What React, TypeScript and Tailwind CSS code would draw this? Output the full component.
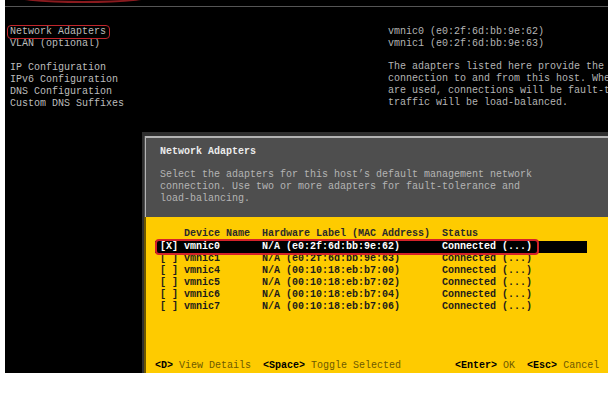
const mono = { fontFamily: '"Liberation Mono", "DejaVu Sans Mono", monospace' };

const menuItems = [
  "Network Adapters",
  "VLAN (optional)",
  "",
  "IP Configuration",
  "IPv6 Configuration",
  "DNS Configuration",
  "Custom DNS Suffixes",
];

const adapters = [
  { name: "vmnic0", mac: "e0:2f:6d:bb:9e:62", checked: true },
  { name: "vmnic1", mac: "e0:2f:6d:bb:9e:63", checked: false },
  { name: "vmnic4", mac: "00:10:18:eb:b7:00", checked: false },
  { name: "vmnic5", mac: "00:10:18:eb:b7:02", checked: false },
  { name: "vmnic6", mac: "00:10:18:eb:b7:04", checked: false },
  { name: "vmnic7", mac: "00:10:18:eb:b7:06", checked: false },
];

function rowText(a: (typeof adapters)[number]) {
  const left = `[${a.checked ? "X" : " "}] ${a.name}`.padEnd(17, " ");
  const mid = `N/A (${a.mac})`.padEnd(30, " ");
  return left + mid + "Connected (...)";
}

function NetworkDialog() {
  return (
    <div className="absolute left-[137px] top-[132px] h-[241px] w-[466px] border-l-2 border-t-4 border-[#2f2f2f] bg-[#4e4e4e]">
      <div className="flex h-full flex-col">
        <div className="ml-[1px] h-[81px] border-l border-t-2 border-[#b4b4b4] pl-[14px] pt-[8px]">
          <div className="h-[12px] text-[10px] font-bold leading-[12px] text-[#ececec]">Network Adapters</div>
          <div className="mt-[11px] whitespace-pre text-[10px] leading-[12px] text-[#b4b4b4]">
            {"Select the adapters for this host’s default management network\nconnection. Use two or more adapters for fault-tolerance and\nload-balancing."}
          </div>
        </div>
        <div className="relative flex-1 border-l-2 border-[#6b5500] bg-[#fecb00] pt-[11px]">
          <div className="whitespace-pre pl-[14px] text-[10px] font-bold leading-[12px] text-[#2a2a2a]">
            {"    Device Name  Hardware Label (MAC Address)  Status"}
          </div>
          <div className="mt-[1px] flex flex-col">
            {adapters.map((a) => (
              <div
                key={a.name}
                className={
                  a.checked
                    ? "mr-[21px] ml-[9px] whitespace-pre bg-black pl-[5px] text-[10px] font-bold leading-[12px] text-white"
                    : "whitespace-pre pl-[14px] text-[10px] font-bold leading-[12px] text-[#1c1c1c]"
                }
              >
                {rowText(a)}
              </div>
            ))}
          </div>
          <div className="absolute left-[9px] top-[22px] h-[16px] w-[384px] rounded-[4px] border-2 border-[#d4222a]" />
          <div className="absolute bottom-[1px] left-[9px] whitespace-pre text-[10px] leading-[12px]">
            <span className="font-bold text-black">{"<D>"}</span>
            <span className="text-[#6e5a00]">{" View Details  "}</span>
            <span className="font-bold text-black">{"<Space>"}</span>
            <span className="text-[#6e5a00]">{" Toggle Selected         "}</span>
            <span className="font-bold text-black">{"<Enter>"}</span>
            <span className="text-[#6e5a00]">{" OK  "}</span>
            <span className="font-bold text-black">{"<Esc>"}</span>
            <span className="text-[#6e5a00]">{" Cancel"}</span>
          </div>
        </div>
      </div>
    </div>
  );
}

export default function App() {
  return (
    <div className="h-[393px] w-[608px] overflow-hidden bg-white" style={mono}>
      <div className="relative ml-[5px] h-[373px] w-[603px] overflow-hidden bg-black">
        <div className="absolute -top-[13px] left-[3px] h-[16px] w-[150px] rounded-[50%] border-2 border-[#8a1a1e]" />
        <div className="mt-[6px] h-[1px] bg-[#555555]" />
        <div className="mt-[19px] flex">
          <div className="relative w-[378px] shrink-0 pl-[5px] text-[10px] leading-[12px] text-[#bcbcbc]">
            {menuItems.map((item, i) => (
              <div key={i} className="h-[12px] whitespace-pre">
                {item}
              </div>
            ))}
            <div className="absolute left-[2px] -top-[1px] h-[14px] w-[103px] rounded-[4px] border border-[#c0262c]" />
          </div>
          <div className="shrink-0 pl-[5px] text-[10px] leading-[12px] text-[#b4b4b4]">
            <div className="whitespace-pre">{"vmnic0 (e0:2f:6d:bb:9e:62)\nvmnic1 (e0:2f:6d:bb:9e:63)"}</div>
            <div className="mt-[11px] whitespace-pre">
              {"The adapters listed here provide the network\nconnection to and from this host. When two or more\nare used, connections will be fault-tolerant and\ntraffic will be load-balanced."}
            </div>
          </div>
        </div>
        <NetworkDialog />
      </div>
    </div>
  );
}
